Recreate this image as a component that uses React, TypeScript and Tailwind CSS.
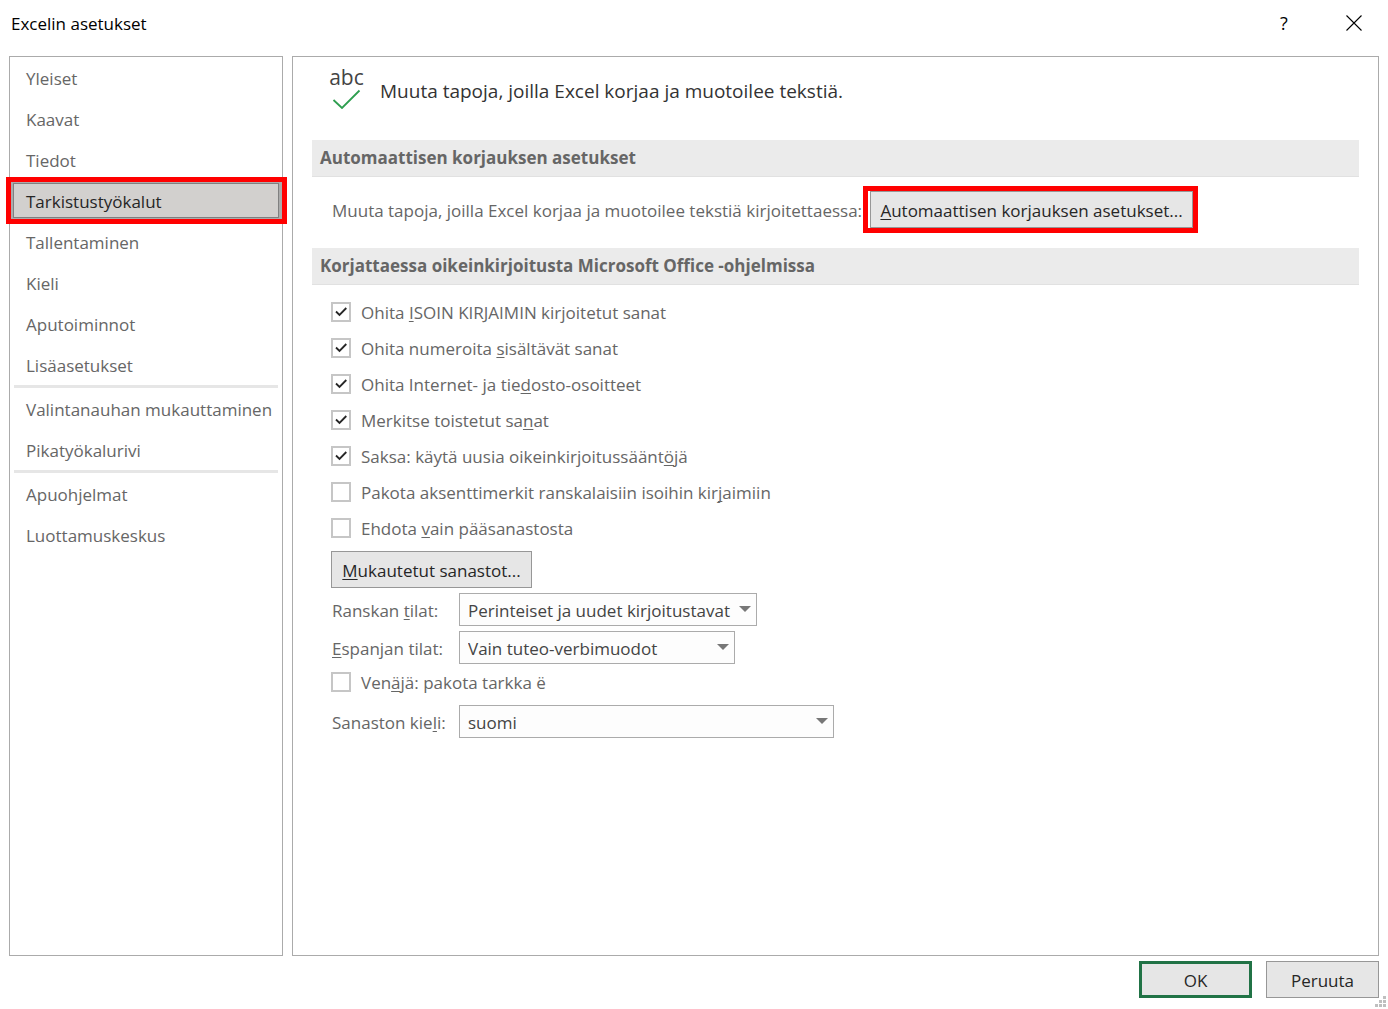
import { Fragment, useState, type ReactNode } from "react";

const navGroups = [
  ["Yleiset", "Kaavat", "Tiedot", "Tarkistustyökalut", "Tallentaminen", "Kieli", "Aputoiminnot", "Lisäasetukset"],
  ["Valintanauhan mukauttaminen", "Pikatyökalurivi"],
  ["Apuohjelmat", "Luottamuskeskus"],
];

const spelling: { parts: [string, string, string]; on: boolean }[] = [
  { parts: ["Ohita ", "I", "SOIN KIRJAIMIN kirjoitetut sanat"], on: true },
  { parts: ["Ohita numeroita ", "s", "isältävät sanat"], on: true },
  { parts: ["Ohita Internet- ja tie", "d", "osto-osoitteet"], on: true },
  { parts: ["Merkitse toistetut sa", "n", "at"], on: true },
  { parts: ["Saksa: käytä uusia oikeinkirjoitussäänt", "ö", "jä"], on: true },
  { parts: ["Pakota aksenttimerkit ranskalaisiin isoihin kir", "j", "aimiin"], on: false },
  { parts: ["Ehdota ", "v", "ain pääsanastosta"], on: false },
];

/** Text with one underlined access-key letter. */
function Keyed({ parts }: { parts: [string, string, string] }) {
  return (
    <span className="whitespace-pre">
      {parts[0]}
      <u className="underline decoration-1 underline-offset-2 [text-decoration-skip-ink:none]">{parts[1]}</u>
      {parts[2]}
    </span>
  );
}

function CheckRow({ parts, on }: { parts: [string, string, string]; on: boolean }) {
  const [checked, setChecked] = useState(on);
  return (
    <label className="flex h-9 items-center gap-[10px]">
      <span className="relative size-5 shrink-0">
        <input
          type="checkbox"
          checked={checked}
          onChange={() => setChecked(!checked)}
          className="block size-5 appearance-none border-2 border-[#c6c6c6] bg-white"
        />
        {checked && (
          <svg viewBox="0 0 20 20" className="pointer-events-none absolute inset-0 size-5" fill="none" stroke="#262626" strokeWidth="1.8">
            <path d="M5 9.500l3.500 3.500L15.300 6" />
          </svg>
        )}
      </span>
      <span className="pt-[2px]">
        <Keyed parts={parts} />
      </span>
    </label>
  );
}

function SelectRow({ id, parts, value, width }: { id: string; parts: [string, string, string]; value: string; width: string }) {
  return (
    <div className="flex h-[33px] items-center">
      <label htmlFor={id} className="w-32 shrink-0 pl-px pt-[2px]">
        <Keyed parts={parts} />
      </label>
      <div className={`relative ${width}`}>
        <select id={id} className="block h-[33px] w-full appearance-none border border-[#ababab] bg-[#fdfdfd] pl-2 pt-[2px] text-[#444444]">
          <option>{value}</option>
        </select>
        <svg viewBox="0 0 12 6" className="pointer-events-none absolute right-[6px] top-[13px] h-[6px] w-3" fill="#777777">
          <path d="M0 0h12L6 6z" />
        </svg>
      </div>
    </div>
  );
}

function SectionTitle({ children }: { children: ReactNode }) {
  return (
    <h2 className="flex h-[37px] items-center border-b border-[#e1e1e1] bg-[#ebebeb] pl-2 font-bold text-[#666666]">{children}</h2>
  );
}

const button = "h-[37px] border border-[#979797] bg-[#e6e6e6] pt-[2px] text-[#262626]";

export default function App() {
  const [page, setPage] = useState("Tarkistustyökalut");
  return (
    <div className="flex min-h-screen flex-col bg-white px-[9px] pb-[11px] font-['Open_Sans',sans-serif] text-[17px] leading-6 text-[#666666]">
      <header className="flex h-14 items-start justify-between pl-[2px] pt-3 text-black">
        <h1>Excelin asetukset</h1>
        <div className="flex items-center gap-[50px] pr-[15px]">
          <button aria-label="Ohje" className="w-5 text-center text-[18px] leading-[22px]">?</button>
          <button aria-label="Sulje" className="size-5">
            <svg viewBox="0 0 20 20" className="size-5" fill="none" stroke="#000" strokeWidth="1.1">
              <path d="M2.500 2.500l15 15M17.500 2.500l-15 15" />
            </svg>
          </button>
        </div>
      </header>

      <div className="flex flex-1 gap-[9px]">
        <nav className="w-[274px] shrink-0 border border-[#ababab]">
          {navGroups.map((group, i) => (
            <Fragment key={group[0]}>
              {i > 0 && <hr className="mx-1 h-[3px] border-0 bg-[#e6e6e6]" />}
              {group.map((name) => (
                <button
                  key={name}
                  onClick={() => setPage(name)}
                  className={`relative block h-[41px] w-full pl-4 pt-[2px] text-left ${name === page ? "bg-[#ababab] text-[#262626]" : ""}`}
                >
                  {name === page && (
                    <>
                      <span className="absolute inset-x-[3px] inset-y-[3px] border border-[#808080] bg-[#d2d0ce]" />
                      <span className="absolute -inset-y-[3px] -left-1 -right-[5px] z-10 border-5 border-[#ff0000]" />
                    </>
                  )}
                  <span className="relative">{name}</span>
                </button>
              ))}
            </Fragment>
          ))}
        </nav>

        <main className="flex-1 border border-[#ababab] px-[19px]">
          <div className="flex h-[83px] items-start gap-4 pl-[17px] pt-2">
            <div className="w-[35px] text-[#444444]">
              <div className="text-center text-[21px] leading-6">abc</div>
              <svg viewBox="0 0 36 20" className="h-5 w-9" fill="none" stroke="#2e9e4f" strokeWidth="1.8">
                <path d="M4.500 11L13 19L30.500 1.500" />
              </svg>
            </div>
            <p className="pt-[14px] text-[19px] text-[#333333]">Muuta tapoja, joilla Excel korjaa ja muotoilee tekstiä.</p>
          </div>

          <SectionTitle>Automaattisen korjauksen asetukset</SectionTitle>
          <div className="flex h-[71px] items-center gap-2 pb-[6px] pl-5">
            <span className="pt-[2px]">Muuta tapoja, joilla Excel korjaa ja muotoilee tekstiä kirjoitettaessa:</span>
            <div className="relative">
              <button className={`${button} w-[323px]`}>
                <Keyed parts={["", "A", "utomaattisen korjauksen asetukset..."]} />
              </button>
              <span className="pointer-events-none absolute -inset-y-[5px] -left-[7px] -right-[5px] border-5 border-[#ff0000]" />
            </div>
          </div>

          <SectionTitle>Korjattaessa oikeinkirjoitusta Microsoft Office -ohjelmissa</SectionTitle>
          <div className="pl-[19px] pt-[9px]">
            {spelling.map((s) => (
              <CheckRow key={s.parts.join("")} {...s} />
            ))}
            <button className={`${button} mb-[5px] mt-[5px] block w-[201px]`}>
              <Keyed parts={["", "M", "ukautetut sanastot..."]} />
            </button>
            <div className="flex flex-col gap-[5px]">
              <SelectRow id="french" parts={["Ranskan ", "t", "ilat:"]} value="Perinteiset ja uudet kirjoitustavat" width="w-[298px]" />
              <SelectRow id="spanish" parts={["", "E", "spanjan tilat:"]} value="Vain tuteo-verbimuodot" width="w-[276px]" />
            </div>
            <CheckRow parts={["Ven", "ä", "jä: pakota tarkka ë"]} on={false} />
            <div className="pt-[5px]">
              <SelectRow id="language" parts={["Sanaston kie", "l", "i:"]} value="suomi" width="w-[375px]" />
            </div>
          </div>
        </main>
      </div>

      <footer className="relative flex justify-end gap-[14px] pt-[5px]">
        <button className="h-[37px] w-[113px] border-3 border-[#217346] bg-[#e6e6e6] pt-[2px] text-[#262626]">OK</button>
        <button className={`${button} w-[113px]`}>Peruuta</button>
        <svg viewBox="0 0 11 11" className="absolute -bottom-[9px] -right-[7px] size-[11px]" fill="#bfbfbf">
          <path d="M8 0h3v3H8zM4 4h3v3H4zM8 4h3v3H8zM0 8h3v3H0zM4 8h3v3H4zM8 8h3v3H8z" />
        </svg>
      </footer>
    </div>
  );
}
